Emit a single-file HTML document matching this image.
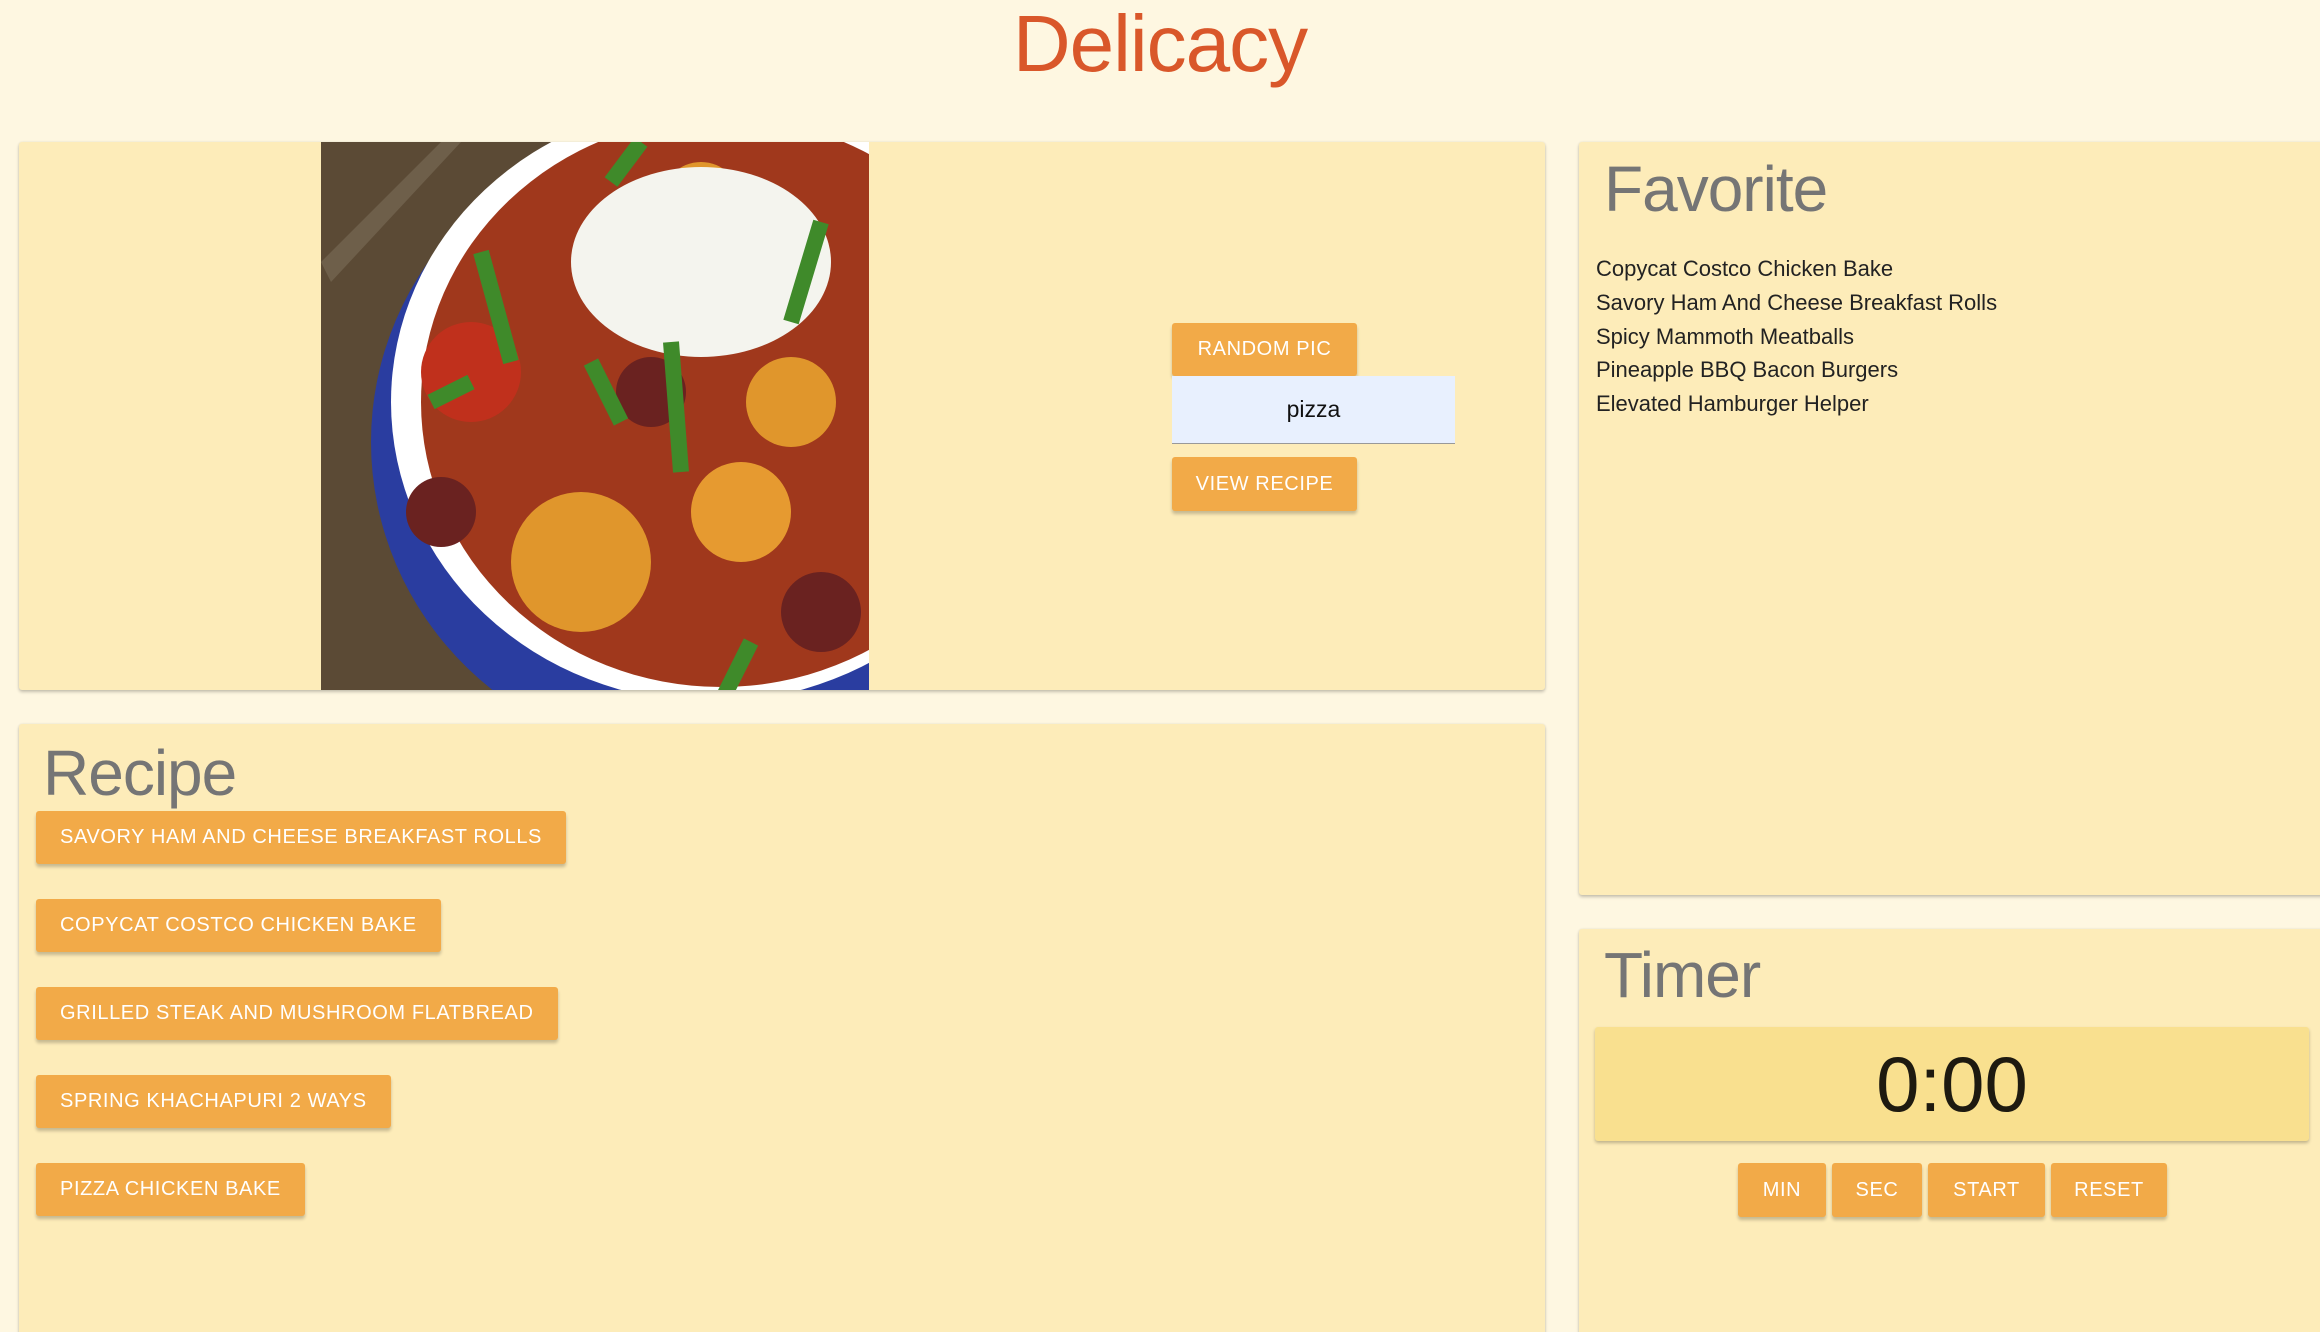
<!DOCTYPE html>
<html style="width:2320px;height:1332px;overflow:hidden"><head><meta charset="utf-8"><style>
*{box-sizing:border-box;margin:0;padding:0}
body{width:2320px;height:1332px;background:#fef7e1;font-family:"Liberation Sans",sans-serif;position:relative;overflow:hidden}
.card{position:absolute;background:#fdecb9;box-shadow:0 2px 3px rgba(0,0,0,.22),0 0 2px rgba(0,0,0,.08);border-radius:3px}
.btn{position:absolute;background:#f2aa48;color:#fff;font-size:20px;letter-spacing:0.6px;display:flex;align-items:center;justify-content:center;border-radius:3px;box-shadow:0 3px 3px rgba(0,0,0,.22);white-space:nowrap;padding:0 24px}
h2{position:absolute;font-weight:400;color:#757575;font-size:64px;letter-spacing:-1px}
.fav{position:absolute;left:1596px;font-size:22px;color:#222}
</style></head><body>
<div style="position:absolute;left:0;width:2320px;top:-2px;text-align:center;color:#d9572a;font-size:80px;letter-spacing:-1px">Delicacy</div>

<div class="card" style="left:19px;top:142px;width:1526px;height:548px">
<svg style="position:absolute;left:302px;top:0" width="548" height="548" viewBox="0 0 548 548">
<rect width="548" height="548" fill="#5b4a35"/>
<path d="M0 120 L120 0 L140 0 L10 140Z" fill="#6e5f4a"/>
<ellipse cx="380" cy="300" rx="330" ry="320" fill="#2a3da0"/>
<ellipse cx="390" cy="260" rx="320" ry="300" fill="#fff"/>
<ellipse cx="400" cy="260" rx="300" ry="285" fill="#a0381c"/>
<circle cx="260" cy="420" r="70" fill="#e0962c"/><circle cx="150" cy="230" r="50" fill="#c0301c"/>
<circle cx="420" cy="370" r="50" fill="#e69a30"/><circle cx="500" cy="470" r="40" fill="#6a2220"/>
<circle cx="120" cy="370" r="35" fill="#6a2220"/><circle cx="380" cy="60" r="40" fill="#e0962c"/>
<circle cx="330" cy="250" r="35" fill="#6a2220"/><circle cx="470" cy="260" r="45" fill="#e0962c"/>
<ellipse cx="380" cy="120" rx="130" ry="95" fill="#f4f4ee"/>
<path d="M160 110 L190 220 M270 220 L300 280 M350 200 L360 330 M430 500 L380 600 M290 40 L320 0 M500 80 L470 180 M110 260 L150 240" stroke="#3f8a2a" stroke-width="16"/>
</svg>
<div class="btn" style="left:1153px;top:181px;width:185px;height:53px">RANDOM PIC</div>
<div style="position:absolute;left:1153px;top:234px;width:283px;height:68px;background:#e8f0fe;border-bottom:1px solid #999;display:flex;align-items:center;justify-content:center;font-size:23px;color:#111">pizza</div>
<div class="btn" style="left:1153px;top:315px;width:185px;height:54px">VIEW RECIPE</div>
</div>

<div class="card" style="left:19px;top:724px;width:1526px;height:640px">
<h2 style="left:24px;top:12px">Recipe</h2>
<div class="btn" style="left:17px;top:87px;height:53px">SAVORY HAM AND CHEESE BREAKFAST ROLLS</div>
<div class="btn" style="left:17px;top:175px;height:53px">COPYCAT COSTCO CHICKEN BAKE</div>
<div class="btn" style="left:17px;top:263px;height:53px">GRILLED STEAK AND MUSHROOM FLATBREAD</div>
<div class="btn" style="left:17px;top:351px;height:53px">SPRING KHACHAPURI 2 WAYS</div>
<div class="btn" style="left:17px;top:439px;height:53px">PIZZA CHICKEN BAKE</div>
</div>

<div class="card" style="left:1579px;top:142px;width:760px;height:753px">
<h2 style="left:25px;top:10px">Favorite</h2>
</div>
<div class="fav" style="top:256px">Copycat Costco Chicken Bake</div>
<div class="fav" style="top:290px">Savory Ham And Cheese Breakfast Rolls</div>
<div class="fav" style="top:324px">Spicy Mammoth Meatballs</div>
<div class="fav" style="top:357px">Pineapple BBQ Bacon Burgers</div>
<div class="fav" style="top:391px">Elevated Hamburger Helper</div>

<div class="card" style="left:1579px;top:929px;width:760px;height:440px">
<h2 style="left:25px;top:9px">Timer</h2>
<div style="position:absolute;left:16px;top:98px;width:714px;height:114px;background:#f9e08f;border-radius:3px;box-shadow:0 2px 3px rgba(0,0,0,.25);display:flex;align-items:center;justify-content:center;font-size:78px;color:#1e1a10">0:00</div>
</div>
<div class="btn" style="left:1738px;top:1163px;width:88px;height:54px;padding:0">MIN</div>
<div class="btn" style="left:1832px;top:1163px;width:90px;height:54px;padding:0">SEC</div>
<div class="btn" style="left:1928px;top:1163px;width:117px;height:54px;padding:0">START</div>
<div class="btn" style="left:2051px;top:1163px;width:116px;height:54px;padding:0">RESET</div>
</body></html>
